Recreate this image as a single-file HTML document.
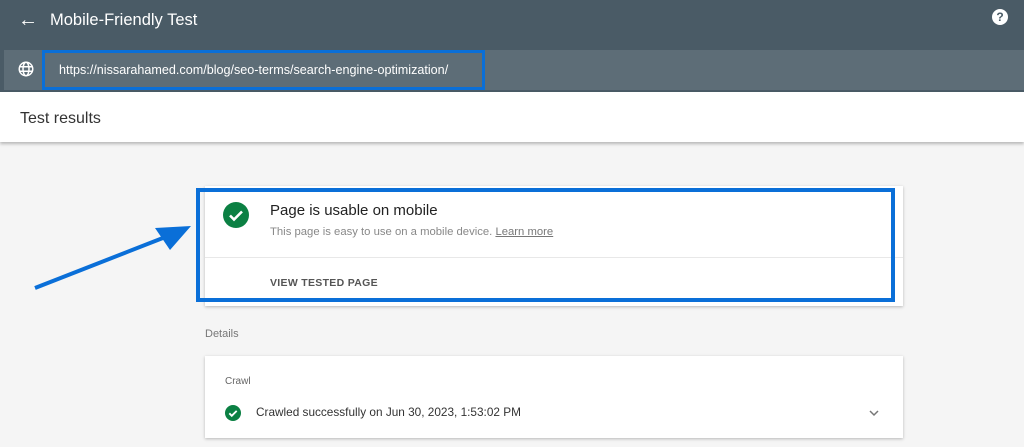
<!DOCTYPE html>
<html><head><style>
*{margin:0;padding:0;box-sizing:border-box}
body{width:1024px;height:447px;overflow:hidden;background:#f5f5f5;font-family:"Liberation Sans",sans-serif;position:relative}
.abs{position:absolute}
</style></head><body>
<div class="abs" style="left:0;top:0;width:1024px;height:50px;background:#4a5b66"></div>
<div class="abs" style="left:18px;top:9px;color:#fff;font-size:20px">&#8592;</div>
<div class="abs" style="left:50px;top:11px;color:#fff;font-size:16.5px">Mobile-Friendly Test</div>
<div class="abs" style="left:992px;top:9px;width:16px;height:16px;border-radius:50%;background:#fff;color:#4a5b66;font-size:12px;font-weight:bold;text-align:center;line-height:16px">?</div>
<div class="abs" style="left:0;top:50px;width:1024px;height:42px;background:#4a5b66"></div>
<div class="abs" style="left:4px;top:50px;width:1020px;height:40px;background:#5d6d77"></div>
<svg class="abs" style="left:17px;top:60px" width="18" height="18" viewBox="0 0 24 24"><circle cx="12" cy="12" r="9" fill="none" stroke="#fff" stroke-width="2"/><ellipse cx="12" cy="12" rx="4" ry="9" fill="none" stroke="#fff" stroke-width="2"/><path d="M3 9h18M3 15h18" stroke="#fff" stroke-width="2"/></svg>
<div class="abs" style="left:42px;top:50px;width:443px;height:40px;border:3px solid #0a6fd8"></div>
<div class="abs" style="left:59px;top:63px;color:#fff;font-size:12.6px">https://nissarahamed.com/blog/seo-terms/search-engine-optimization/</div>
<div class="abs" style="left:0;top:92px;width:1024px;height:50px;background:#fff;box-shadow:0 2px 3px rgba(0,0,0,.25)"></div>
<div class="abs" style="left:20px;top:110px;color:#333;font-size:16px">Test results</div>
<div class="abs" style="left:205px;top:186px;width:698px;height:120px;background:#fff;box-shadow:0 1px 3px rgba(0,0,0,.25)"></div>
<div class="abs" style="left:205px;top:257px;width:698px;height:1px;background:#e8e8e8"></div>
<div class="abs" style="left:196px;top:188px;width:699px;height:114px;border:4px solid #0a6fd8"></div>
<svg class="abs" style="left:223px;top:202px" width="26" height="26" viewBox="0 0 26 26"><circle cx="13" cy="13" r="13" fill="#0b8043"/><path d="M7 13.5l4 4 8-8" fill="none" stroke="#fff" stroke-width="2.6"/></svg>
<div class="abs" style="left:270px;top:202px;color:#222;font-size:15px">Page is usable on mobile</div>
<div class="abs" style="left:270px;top:226px;color:#888;font-size:11.3px">This page is easy to use on a mobile device. <span style="text-decoration:underline;color:#777">Learn more</span></div>
<div class="abs" style="left:270px;top:277px;color:#555;font-size:10.5px;font-weight:bold;letter-spacing:.3px">VIEW TESTED PAGE</div>
<svg class="abs" style="left:0;top:0" width="1024" height="447"><path d="M35 288L168 236" stroke="#0a6fd8" stroke-width="4"/><path d="M191 226L155 228L170 250Z" fill="#0a6fd8"/></svg>
<div class="abs" style="left:205px;top:328px;color:#777;font-size:11px">Details</div>
<div class="abs" style="left:205px;top:356px;width:698px;height:82px;background:#fff;box-shadow:0 1px 3px rgba(0,0,0,.25)"></div>
<div class="abs" style="left:225px;top:376px;color:#666;font-size:10px">Crawl</div>
<svg class="abs" style="left:225px;top:405px" width="16" height="16" viewBox="0 0 26 26"><circle cx="13" cy="13" r="13" fill="#0b8043"/><path d="M7 13.5l4 4 8-8" fill="none" stroke="#fff" stroke-width="3"/></svg>
<div class="abs" style="left:256px;top:405px;color:#333;font-size:11.8px">Crawled successfully on Jun 30, 2023, 1:53:02 PM</div>
<svg class="abs" style="left:868px;top:408px" width="12" height="10" viewBox="0 0 12 10"><path d="M2 3l4 4 4-4" fill="none" stroke="#777" stroke-width="1.5"/></svg>
</body></html>
